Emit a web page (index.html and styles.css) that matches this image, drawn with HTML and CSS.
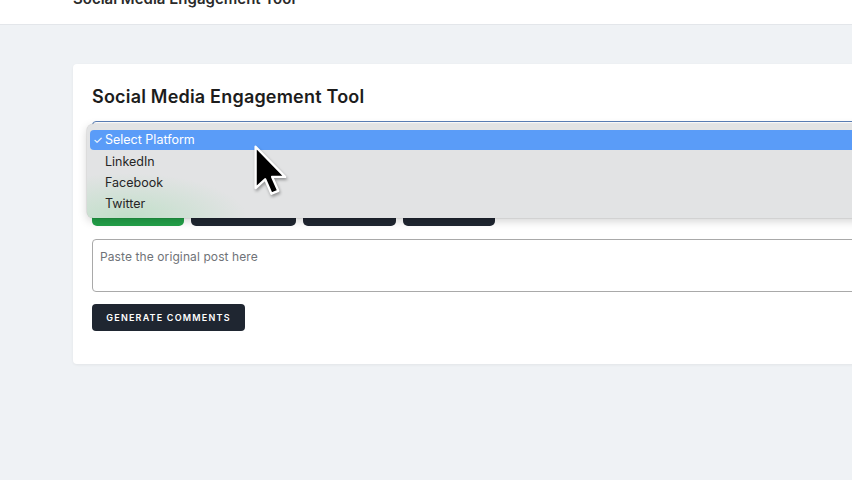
FILE: index.html
```html
<!DOCTYPE html>
<html>
<head>
<meta charset="utf-8">
<link rel="stylesheet" href="styles.css">
</head>
<body>
<header class="topbar"><span class="brand">Social Media Engagement Tool</span></header>
<main class="main">
  <section class="card">
    <h2 class="title">Social Media Engagement Tool</h2>
    <div class="select"></div>
    <div class="tabs">
      <button class="tab green"></button>
      <button class="tab w105"></button>
      <button class="tab w93"></button>
      <button class="tab w92"></button>
    </div>
    <div class="textarea">Paste the original post here</div>
    <button class="generate">GENERATE COMMENTS</button>
  </section>
</main>
<div class="menu">
  <div class="opt selected"><span class="check">✓</span>Select Platform</div>
  <div class="opt">LinkedIn</div>
  <div class="opt">Facebook</div>
  <div class="opt">Twitter</div>
</div>
<svg class="cursor" width="36" height="54" viewBox="0 0 20 30">
  <path d="M2 1.5 L2 24.5 L7.3 19.6 L10.8 27.6 L14.6 26 L11.2 18.3 L18.4 18.3 Z" fill="#000" stroke="#fff" stroke-width="1.3" stroke-linejoin="round"/>
</svg>
</body>
</html>
```
FILE: styles.css
```css
html, body { margin: 0; padding: 0; }
body {
  width: 852px; height: 480px; overflow: hidden;
  background: #eff2f5;
  font-family: Inter, "Noto Sans", sans-serif;
  position: relative;
}
.topbar {
  height: 24px; background: #fff; border-bottom: 1px solid #e3e6ea;
  overflow: hidden; padding-left: 73px; box-sizing: content-box;
}
.brand {
  display: block; margin-top: -9px; font-size: 15px; line-height: 16px;
  font-weight: 600; color: #2a2a2a;
}
.main { padding-top: 39px; padding-left: 73px; }
.card {
  width: 820px; background: #fff; border-radius: 4px;
  box-shadow: 0 1px 3px rgba(0,0,0,0.06);
  padding: 20px 19px 33px; box-sizing: border-box;
}
.title {
  margin: 0; font-size: 18px; line-height: 26px; font-weight: 600; color: #1c1c1c;
  letter-spacing: 0.2px;
}
.select {
  margin-top: 11px; height: 36px; border: 1px solid #5b7fb6; border-radius: 4px;
  box-sizing: border-box;
}
.tabs { display: flex; gap: 7px; margin-top: 41px; }
.tab {
  height: 28px; border: 0; border-radius: 5px; background: #1f2631; padding: 0;
}
.tab.green { width: 92px; background: #22a148; }
.tab.w105 { width: 105px; }
.tab.w93 { width: 93px; }
.tab.w92 { width: 92px; }
.textarea {
  margin-top: 13px; height: 53px; border: 1px solid #a9a9a9; border-radius: 4px;
  box-sizing: border-box; padding: 10px 7px; font-size: 12px; color: #6f7378;
  line-height: 14px; letter-spacing: 0.1px;
}
.generate {
  margin-top: 12px; height: 27px; width: 153px; border: 0; border-radius: 4px;
  background: #1f2631; color: #fff; font-family: Inter, sans-serif;
  font-size: 9px; font-weight: 600; letter-spacing: 1.2px; padding: 0;
}
.menu {
  position: absolute; left: 87px; top: 124px; width: 800px; height: 94px;
  background-color: #e2e3e4; border-radius: 6px;
  box-shadow: 0 3px 10px rgba(0,0,0,0.18), 0 0 0 0.5px rgba(0,0,0,0.12);
  padding: 6px 3px; box-sizing: border-box;
  background-image: radial-gradient(ellipse 120px 45px at 40px 100%, rgba(130,215,150,0.35), rgba(130,215,150,0) 100%);
}
.opt {
  height: 21px; line-height: 21px; font-size: 12.5px; color: #262626;
  padding-left: 15px; position: relative; font-family: Inter, "Noto Sans", sans-serif;
}
.opt.selected {
  background: #5a9cf8; color: #fff; border-radius: 4px; height: 20px; line-height: 20px;
  margin-bottom: 1px;
}
.check { position: absolute; left: 3px; font-size: 11px; }
.cursor {
  position: absolute; left: 252px; top: 144px;
  filter: drop-shadow(1px 2px 1.5px rgba(0,0,0,0.35));
}
```
